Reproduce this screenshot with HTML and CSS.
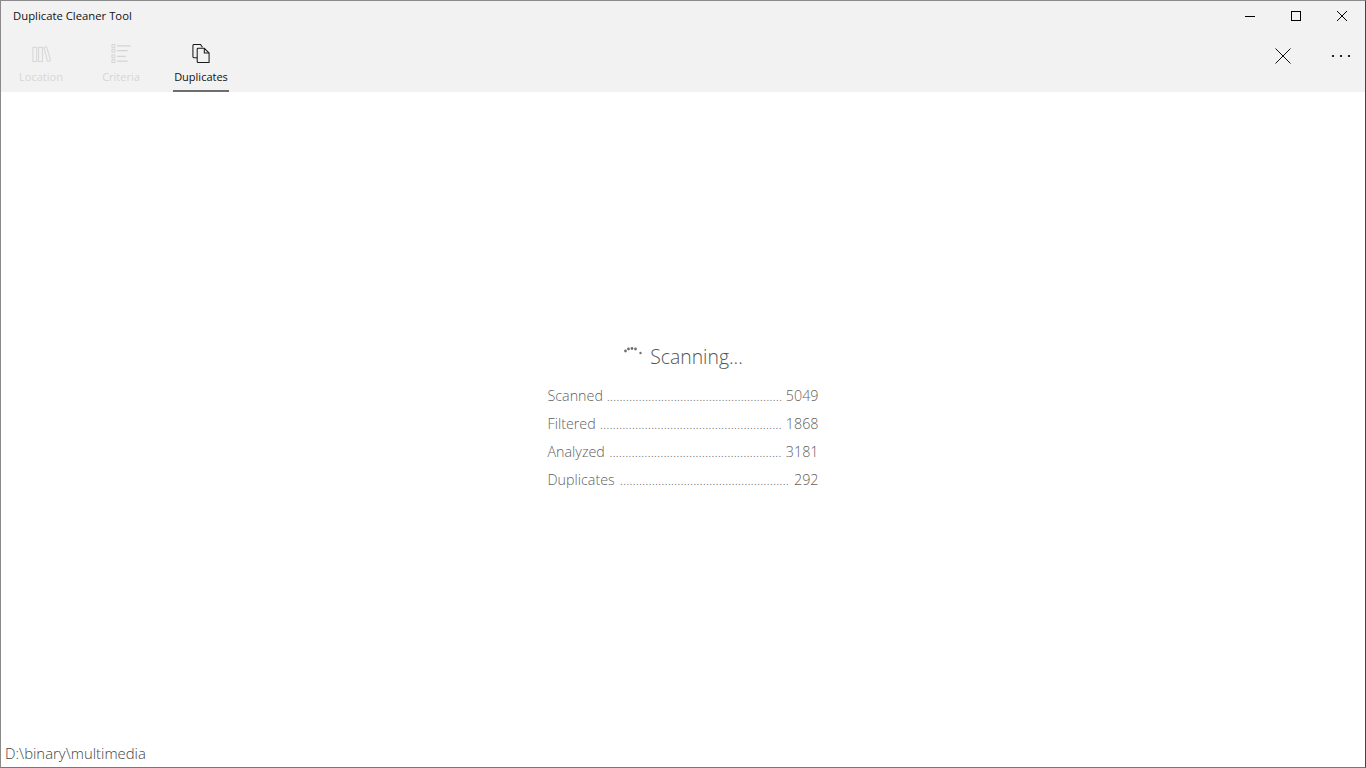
FILE: index.html
```html
<!DOCTYPE html>
<html lang="en">
<head>
    <meta charset="UTF-8">
    <title>Duplicate Cleaner Tool</title>
    <link rel="stylesheet" href="styles.css">
</head>
<body>
    <div class="window">
        <div class="titlebar">
            <span class="app-title">Duplicate Cleaner Tool</span>
            <div class="window-buttons">
                <div class="window-button">
                    <svg width="10" height="10" viewBox="0 0 10 10"><path d="M0 5.5H10" stroke="#000" fill="none"/></svg>
                </div>
                <div class="window-button">
                    <svg width="10" height="10" viewBox="0 0 10 10"><rect x="0.5" y="0.5" width="9" height="9" stroke="#000" fill="none"/></svg>
                </div>
                <div class="window-button">
                    <svg width="10" height="10" viewBox="0 0 10 10"><path d="M0 0L10 10M10 0L0 10" stroke="#000" fill="none"/></svg>
                </div>
            </div>
        </div>

        <div class="toolbar">
            <div class="tabs">
                <div class="tab disabled">
                    <svg width="20" height="20" viewBox="0 0 20 20" fill="none" stroke="#d4d4d4" stroke-width="1">
                        <rect x="1.5" y="3.5" width="4" height="15"/>
                        <rect x="7.5" y="3.5" width="4" height="15"/>
                        <path d="M13 3.5L16 3L20 17.5L17 18.5Z"/>
                    </svg>
                    <span class="tab-label">Location</span>
                </div>
                <div class="tab disabled">
                    <svg width="20" height="20" viewBox="0 0 20 20" fill="none" stroke="#d4d4d4" stroke-width="1">
                        <rect x="0.5" y="0.5" width="3" height="3"/>
                        <rect x="0.5" y="5.5" width="3" height="3"/>
                        <rect x="0.5" y="11.5" width="3" height="3"/>
                        <rect x="0.5" y="16.5" width="3" height="3"/>
                        <path d="M6 2H20M6 7H17M6 13H15M6 18H17" stroke-width="1.4"/>
                    </svg>
                    <span class="tab-label">Criteria</span>
                </div>
                <div class="tab active">
                    <svg width="20" height="20" viewBox="0 0 20 20" fill="none" stroke="#1a1a1a" stroke-width="1.1">
                        <path d="M6 14.5H2.5A1 1 0 0 1 1.5 13.5V1.5A1 1 0 0 1 2.5 0.5H9.5L11.5 3.5"/>
                        <path d="M6 5.5A1 1 0 0 1 7 4.5H13.5L18.5 9.5V19.5H7A1 1 0 0 1 6 18.5Z"/>
                        <path d="M13.5 4.5V9.5H18.5"/>
                    </svg>
                    <span class="tab-label">Duplicates</span>
                </div>
            </div>
            <div class="actions">
                <div class="action-button">
                    <svg width="16" height="16" viewBox="0 0 16 16"><path d="M0.5 0.5L15.5 15.5M15.5 0.5L0.5 15.5" stroke="#111" fill="none"/></svg>
                </div>
                <div class="action-button more">
                    <span class="dot"></span><span class="dot"></span><span class="dot"></span>
                </div>
            </div>
        </div>

        <div class="content">
            <div class="scan-panel">
                <div class="scan-heading">
                    <svg class="spinner" width="20" height="12" viewBox="0 0 20 12" fill="#707070">
                        <circle cx="2.5" cy="6" r="1.4"/>
                        <circle cx="5.5" cy="4" r="1.4"/>
                        <circle cx="9" cy="3.5" r="1.4"/>
                        <circle cx="12.5" cy="4" r="1.4"/>
                        <circle cx="17.5" cy="8" r="1.2"/>
                    </svg>
                    <span>Scanning...</span>
                </div>
                <div class="stat-row"><span>Scanned</span><span class="leader">.......................................................</span><span>5049</span></div>
                <div class="stat-row"><span>Filtered</span><span class="leader">.........................................................</span><span>1868</span></div>
                <div class="stat-row"><span>Analyzed</span><span class="leader">......................................................</span><span>3181</span></div>
                <div class="stat-row"><span>Duplicates</span><span class="leader">.....................................................</span><span>292</span></div>
            </div>
        </div>

        <div class="statusbar">D:\binary\multimedia</div>
    </div>
</body>
</html>
```

FILE: styles.css
```css
html, body {
    margin: 0;
    padding: 0;
    height: 100%;
    overflow: hidden;
}
body {
    font-family: "Open Sans", "Noto Sans", sans-serif;
    background-color: #ffffff;
}
.window {
    box-sizing: border-box;
    height: 768px;
    display: flex;
    flex-direction: column;
    border: 1px solid #8a8a8a;
    border-bottom-color: #777777;
    border-right-color: #3c4650;
}

/* Title bar */
.titlebar {
    height: 31px;
    flex: none;
    display: flex;
    justify-content: space-between;
    background-color: #f2f2f2;
}
.app-title {
    padding-left: 12px;
    font-size: 11.3px;
    line-height: 30px;
    color: #111111;
}
.window-buttons {
    display: flex;
}
.window-button {
    width: 46px;
    height: 30px;
    display: flex;
    align-items: center;
    justify-content: center;
}

/* Toolbar */
.toolbar {
    height: 60px;
    flex: none;
    display: flex;
    justify-content: space-between;
    background-color: #f2f2f2;
}
.tabs {
    display: flex;
}
.tab {
    width: 80px;
    display: flex;
    flex-direction: column;
    align-items: center;
    padding-top: 12px;
    box-sizing: border-box;
}
.tab-label {
    margin-top: 5px;
    padding: 0 1px 5px;
    font-size: 11px;
    line-height: 17px;
    border-bottom: 2px solid transparent;
    white-space: nowrap;
}
.tab.disabled .tab-label {
    color: #d6d6d6;
}
.tab.active .tab-label {
    color: #111111;
    border-bottom-color: #6e6e6e;
}
.actions {
    display: flex;
}
.action-button {
    width: 68px;
    height: 48px;
    display: flex;
    align-items: center;
    justify-content: center;
}
.action-button.more {
    width: 48px;
    gap: 6px;
}
.dot {
    width: 2px;
    height: 2px;
    background-color: #222222;
}

/* Scan progress */
.content {
    flex: 1;
    display: flex;
    align-items: center;
    justify-content: center;
    background-color: #ffffff;
}
.scan-panel {
    width: 271px;
    color: #5f5f5f;
    font-size: 14.3px;
    margin-top: 4px;
}
.scan-heading {
    display: flex;
    align-items: center;
    justify-content: center;
    gap: 7px;
    font-size: 19.4px;
    font-weight: 300;
    line-height: 28px;
    margin-bottom: 11px;
    color: #555555;
}
.spinner {
    margin-top: -12px;
}
.stat-row {
    display: flex;
    justify-content: space-between;
    height: 28px;
    line-height: 28px;
    font-weight: 300;
    white-space: nowrap;
}
.leader {
    font-size: 13.4px;
}

/* Status bar */
.statusbar {
    flex: none;
    height: 26px;
    padding-left: 4px;
    font-size: 14.9px;
    line-height: 24px;
    font-weight: 300;
    color: #444444;
}
```
